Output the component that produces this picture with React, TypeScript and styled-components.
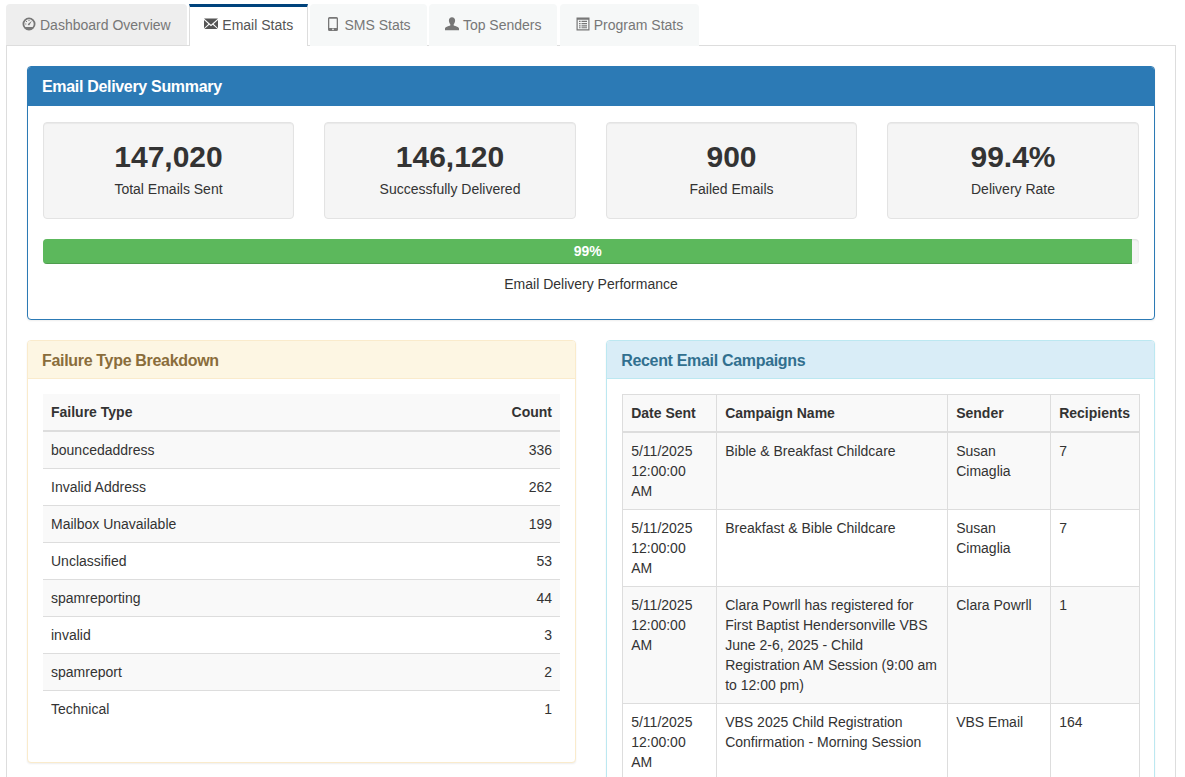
import React from "react";
import styled, { createGlobalStyle } from "styled-components";

const Global = createGlobalStyle`
  html, body { margin: 0; padding: 0; background: #fff; overflow: hidden; height: 777px; }
  body { font-family: "Liberation Sans", Arial, sans-serif; font-size: 14px; line-height: 20px; color: #333; }
  * { box-sizing: border-box; }
`;

const Page = styled.div`
  padding: 4px 9px 0 6px;
`;

const Tabs = styled.ul`
  display: flex;
  list-style: none;
  margin: 0;
  padding: 0;
  height: 41px;
`;

type TabKind = "hover" | "active" | "idle";

const Tab = styled.li<{ $kind: TabKind }>`
  height: ${(p) => (p.$kind === "hover" ? "41px" : "42px")};
  margin-right: ${(p) => (p.$kind === "hover" ? "2.6px" : "2.3px")};
  padding: ${(p) => (p.$kind === "active" ? "8px 14px 0" : "11px 16px 0")};
  display: flex;
  align-items: flex-start;
  gap: 4px;
  position: relative;
  z-index: ${(p) => (p.$kind === "hover" ? 0 : 2)};
  border-radius: ${(p) => (p.$kind === "active" ? "0" : "4px 4px 0 0")};
  color: ${(p) => (p.$kind === "active" ? "#555" : "#777")};
  background: ${(p) => (p.$kind === "active" ? "#fff" : p.$kind === "hover" ? "#eee" : "#f6f8f8")};
  border-top: ${(p) => (p.$kind === "active" ? "3px solid #00437c" : "none")};
  border-left: ${(p) => (p.$kind === "active" ? "1px solid #ddd" : "none")};
  border-right: ${(p) => (p.$kind === "active" ? "1px solid #ddd" : "none")};
`;

const TabIcon = styled.svg`
  width: 14px;
  height: 14px;
  fill: currentColor;
  flex: none;
  margin-top: 2px;
`;

const TabContent = styled.div`
  border: 1px solid #ddd;
  padding: 20px;
  height: 800px;
`;

type Tone = "primary" | "warning" | "info";
const toneBorder: Record<Tone, string> = { primary: "#2c7ab5", warning: "#faebcc", info: "#bce8f1" };
const toneBg: Record<Tone, string> = { primary: "#2c7ab5", warning: "#fdf6e3", info: "#d9edf7" };
const toneText: Record<Tone, string> = { primary: "#fff", warning: "#8a6d3b", info: "#31708f" };

const Panel = styled.section<{ $tone: Tone }>`
  border: 1px solid ${(p) => toneBorder[p.$tone]};
  border-radius: 4px;
  background: #fff;
  box-shadow: 0 1px 2px rgba(0, 0, 0, 0.07);
`;

const PanelHeading = styled.h3<{ $tone: Tone }>`
  margin: 0;
  height: ${(p) => (p.$tone === "primary" ? "39px" : "38px")};
  padding: 11px 14px 0;
  font-size: 16px;
  line-height: 18px;
  letter-spacing: -0.32px;
  font-weight: bold;
  color: ${(p) => toneText[p.$tone]};
  background: ${(p) => toneBg[p.$tone]};
  border-bottom: 1px solid ${(p) => toneBorder[p.$tone]};
  border-radius: 3px 3px 0 0;
`;

const PanelBody = styled.div`
  padding: 15px;
`;

const StatGrid = styled.div`
  display: grid;
  grid-template-columns: 251px 252px 251px 252px;
  column-gap: 30px;
  margin: 1px 0 20px;
`;

const StatWell = styled.div`
  height: 97px;
  padding: 17px 19px 19px;
  text-align: center;
  background: #f5f5f5;
  border: 1px solid #e3e3e3;
  border-radius: 4px;
  box-shadow: inset 0 1px 1px rgba(0, 0, 0, 0.05);
`;

const StatValue = styled.div`
  font-size: 30px;
  font-weight: bold;
  line-height: 33px;
  margin-bottom: 6px;
`;

const Progress = styled.div`
  height: 25px;
  margin-bottom: 10px;
  background: #f5f5f5;
  border-radius: 4px;
  overflow: hidden;
  box-shadow: inset 0 1px 2px rgba(0, 0, 0, 0.1);
`;

const ProgressFill = styled.div`
  height: 100%;
  text-align: center;
  color: #fff;
  font-weight: bold;
  line-height: 25px;
  background: #5cb85c;
  box-shadow: inset 0 -1px 0 rgba(0, 0, 0, 0.15);
`;

const Caption = styled.p`
  margin: 0 0 10px;
  text-align: center;
`;

const Columns = styled.div`
  display: grid;
  grid-template-columns: 549px 548.5px;
  column-gap: 30.2px;
  align-items: start;
  margin-top: 20px;
`;

const DataTable = styled.table<{ $bordered?: boolean }>`
  width: 100%;
  table-layout: fixed;
  border-collapse: collapse;
  border-spacing: 0;
  margin-bottom: 20px;
  ${(p) => (p.$bordered ? "border: 1px solid #ddd;" : "")}
`;

const HeadCell = styled.th<{ $right?: boolean; $bordered?: boolean }>`
  padding: 8px;
  text-align: ${(p) => (p.$right ? "right" : "left")};
  vertical-align: bottom;
  background: #f9f9f9;
  border-bottom: 2px solid #ddd;
  ${(p) => (p.$bordered ? "border-left: 1px solid #ddd; border-right: 1px solid #ddd; border-top: 1px solid #ddd;" : "")}
`;

const Row = styled.tr<{ $striped: boolean }>`
  background: ${(p) => (p.$striped ? "#f9f9f9" : "#fff")};
`;

const Cell = styled.td<{ $right?: boolean; $bordered?: boolean }>`
  padding: 8px;
  vertical-align: top;
  text-align: ${(p) => (p.$right ? "right" : "left")};
  border-top: 1px solid #ddd;
  ${(p) => (p.$bordered ? "border: 1px solid #ddd;" : "")}
`;

const DashboardIcon = () => (
  <TabIcon viewBox="0 0 14 14">
    <path
      fillRule="evenodd"
      d="M7 .5a6.5 6.5 0 1 1 0 13 6.5 6.5 0 0 1 0-13zM7 2.300a4.700 4.700 0 0 0-4.700 4.700c0 1.100.4 2.100 1 2.900h7.400c.6-.8 1-1.800 1-2.900A4.700 4.700 0 0 0 7 2.300z"
    />
    <path d="M6.200 6.700 9.900 3.700 7.600 7.800a.9.900 0 1 1-1.400-1.100zM6.500 2.900h1v1.100h-1zM3.200 6.500h1.100v1H3.200zM4 4h1v1H4z" />
  </TabIcon>
);

const EnvelopeIcon = () => (
  <TabIcon viewBox="0 0 14 14">
    <path d="M0 1.500h14L7 7.800zM0 3l4.400 4L0 11.200zM14 3v8.200L9.600 7zM.4 12l4.900-4.300L7 9.300l1.700-1.600 4.900 4.300z" />
  </TabIcon>
);

const PhoneIcon = () => (
  <TabIcon viewBox="0 0 14 14">
    <path
      fillRule="evenodd"
      d="M3.500 0h7A1.500 1.500 0 0 1 12 1.500v11a1.500 1.500 0 0 1-1.500 1.500h-7A1.500 1.500 0 0 1 2 12.500v-11A1.500 1.500 0 0 1 3.500 0zM3.300 1.700v9.300h7.400V1.700zM7 11.600a.8.8 0 1 0 0 1.600.8.8 0 0 0 0-1.600z"
    />
  </TabIcon>
);

const UserIcon = () => (
  <TabIcon viewBox="0 0 14 14">
    <path d="M7 .2c2 0 3.100 1.300 3.100 3.300 0 1.500-.6 2.900-1.400 3.700v1.300c1.700.7 5.300 1.400 5.300 3v1.700H0v-1.700c0-1.600 3.600-2.300 5.300-3V7.200C4.500 6.400 3.900 5 3.900 3.500 3.900 1.500 5 .2 7 .2z" />
  </TabIcon>
);

const ListIcon = () => (
  <TabIcon viewBox="0 0 14 14">
    <path
      fillRule="evenodd"
      d="M.5.500h13v13H.5zM1.700 2.700v9.600h10.600V2.700zM3 3.800h1.600v1.200H3zM5.500 3.800H11v1.200H5.500zM3 6h1.600v1.200H3zM5.500 6H11v1.200H5.500zM3 8.200h1.600v1.200H3zM5.500 8.200H11v1.200H5.500zM3 10.300h1.600v1H3zM5.500 10.300H11v1H5.500z"
    />
  </TabIcon>
);

const tabs: { label: string; kind: TabKind; icon: React.ReactNode }[] = [
  { label: "Dashboard Overview", kind: "hover", icon: <DashboardIcon /> },
  { label: "Email Stats", kind: "active", icon: <EnvelopeIcon /> },
  { label: "SMS Stats", kind: "idle", icon: <PhoneIcon /> },
  { label: "Top Senders", kind: "idle", icon: <UserIcon /> },
  { label: "Program Stats", kind: "idle", icon: <ListIcon /> },
];

const stats = [
  ["147,020", "Total Emails Sent"],
  ["146,120", "Successfully Delivered"],
  ["900", "Failed Emails"],
  ["99.4%", "Delivery Rate"],
];

const failures: [string, number][] = [
  ["bouncedaddress", 336],
  ["Invalid Address", 262],
  ["Mailbox Unavailable", 199],
  ["Unclassified", 53],
  ["spamreporting", 44],
  ["invalid", 3],
  ["spamreport", 2],
  ["Technical", 1],
];

const campaigns: [string, string, string, string][] = [
  ["5/11/2025 12:00:00 AM", "Bible & Breakfast Childcare", "Susan Cimaglia", "7"],
  ["5/11/2025 12:00:00 AM", "Breakfast & Bible Childcare", "Susan Cimaglia", "7"],
  [
    "5/11/2025 12:00:00 AM",
    "Clara Powrll has registered for First Baptist Hendersonville VBS June 2-6, 2025 - Child Registration AM Session (9:00 am to 12:00 pm)",
    "Clara Powrll",
    "1",
  ],
  ["5/11/2025 12:00:00 AM", "VBS 2025 Child Registration Confirmation - Morning Session", "VBS Email", "164"],
];

export default function App() {
  return (
    <Page>
      <Global />
      <Tabs>
        {tabs.map((t) => (
          <Tab key={t.label} $kind={t.kind}>
            {t.icon}
            {t.label}
          </Tab>
        ))}
      </Tabs>
      <TabContent>
        <Panel $tone="primary">
          <PanelHeading $tone="primary">Email Delivery Summary</PanelHeading>
          <PanelBody>
            <StatGrid>
              {stats.map(([value, label]) => (
                <StatWell key={label}>
                  <StatValue>{value}</StatValue>
                  {label}
                </StatWell>
              ))}
            </StatGrid>
            <Progress>
              <ProgressFill style={{ width: "99.4%" }}>99%</ProgressFill>
            </Progress>
            <Caption>Email Delivery Performance</Caption>
          </PanelBody>
        </Panel>
        <Columns>
          <Panel $tone="warning">
            <PanelHeading $tone="warning">Failure Type Breakdown</PanelHeading>
            <PanelBody>
              <DataTable>
                <thead>
                  <tr>
                    <HeadCell>Failure Type</HeadCell>
                    <HeadCell $right>Count</HeadCell>
                  </tr>
                </thead>
                <tbody>
                  {failures.map(([name, count], i) => (
                    <Row key={name} $striped={i % 2 === 0}>
                      <Cell>{name}</Cell>
                      <Cell $right>{count}</Cell>
                    </Row>
                  ))}
                </tbody>
              </DataTable>
            </PanelBody>
          </Panel>
          <Panel $tone="info">
            <PanelHeading $tone="info">Recent Email Campaigns</PanelHeading>
            <PanelBody>
              <DataTable $bordered>
                <colgroup>
                  <col width="94" />
                  <col width="231" />
                  <col width="103" />
                  <col width="89" />
                </colgroup>
                <thead>
                  <tr>
                    <HeadCell $bordered>Date Sent</HeadCell>
                    <HeadCell $bordered>Campaign Name</HeadCell>
                    <HeadCell $bordered>Sender</HeadCell>
                    <HeadCell $bordered>Recipients</HeadCell>
                  </tr>
                </thead>
                <tbody>
                  {campaigns.map(([date, name, sender, count], i) => (
                    <Row key={name} $striped={i % 2 === 0}>
                      <Cell $bordered>{date}</Cell>
                      <Cell $bordered>{name}</Cell>
                      <Cell $bordered>{sender}</Cell>
                      <Cell $bordered>{count}</Cell>
                    </Row>
                  ))}
                </tbody>
              </DataTable>
            </PanelBody>
          </Panel>
        </Columns>
      </TabContent>
    </Page>
  );
}
